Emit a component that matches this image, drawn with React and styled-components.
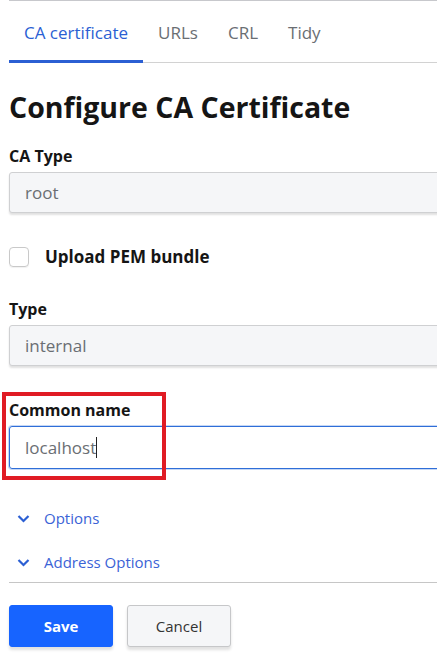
import React from "react"
import styled, { createGlobalStyle } from "styled-components"

const GlobalStyle = createGlobalStyle`
  body {
    margin: 0;
    background: #fff;
    font-family: "Open Sans", "Noto Sans", sans-serif;
    color: #151515;
    overflow: hidden;
  }
`

const Page = styled.div`
  width: 437px;
  height: 670px;
  overflow: hidden;
  padding-left: 9px;
  box-sizing: border-box;
`

const Inner = styled.div`
  width: 470px;
  border-top: 1px solid #c7c8cc;
`

const Tabs = styled.ul`
  display: flex;
  margin: 0;
  padding: 0;
  list-style: none;
  height: 61px;
  border-bottom: 1px solid #d2d2d2;
`

const Tab = styled.li`
  padding: 3px 15px 0;
  display: flex;
  align-items: center;
  font-size: 17px;
  color: ${p => (p.$active ? "#2b5fd3" : "#6a6e73")};
  border-bottom: 3px solid ${p => (p.$active ? "#2b5fd3" : "transparent")};
  margin-bottom: -1px;
`

const Heading = styled.h1`
  margin: 0;
  padding-top: 24px;
  font-size: 28.5px;
  line-height: 40px;
  font-weight: 700;
  color: #151515;
`

const Form = styled.div`
  display: flex;
  flex-direction: column;
`

const Label = styled.label`
  display: block;
  font-size: 16px;
  font-weight: 700;
  line-height: 22px;
  margin-top: ${p => p.$top || 0}px;
  margin-bottom: 5px;
`

const Select = styled.div`
  height: 41px;
  box-sizing: border-box;
  background: #f5f6f8;
  border: 1px solid #cfd0d2;
  border-radius: 3px;
  box-shadow: 0 2px 2px rgba(0, 0, 0, 0.12);
  padding: 0 15px;
  display: flex;
  align-items: center;
  font-size: 17px;
  color: #6a6e73;
`

const CheckRow = styled.div`
  display: flex;
  align-items: center;
  gap: 16px;
  margin-top: 32px;
  font-size: 17px;
  font-weight: 700;
`

const Box = styled.span`
  width: 18px;
  height: 18px;
  border: 1px solid #c9c9c9;
  border-radius: 4px;
  box-shadow: 0 1px 1px rgba(0, 0, 0, 0.06);
`

const Highlight = styled.div`
  position: relative;
  margin-top: 33px;
`

const RedFrame = styled.div`
  position: absolute;
  left: -7px;
  top: -7px;
  width: 164px;
  height: 88px;
  box-sizing: border-box;
  border: 4px solid #e01b24;
  pointer-events: none;
`

const TextInput = styled.div`
  height: 43px;
  box-sizing: border-box;
  border: 1px solid #2f6ed8;
  border-radius: 3px;
  box-shadow: 0 0 0 1px #c5d7f5;
  padding: 0 15px;
  display: flex;
  align-items: center;
  font-size: 17px;
  color: #6a6e73;
`

const Caret = styled.span`
  display: inline-block;
  width: 1px;
  height: 21px;
  background: #222;
`

const Toggles = styled.div`
  display: flex;
  flex-direction: column;
  gap: 4px;
  margin-top: 29px;
  border-bottom: 1px solid #c6c6c6;
`

const Toggle = styled.div`
  display: flex;
  align-items: center;
  gap: 14px;
  padding-left: 8px;
  height: 40px;
  font-size: 15px;
  color: #3b63d6;
`

const Buttons = styled.div`
  display: flex;
  gap: 14px;
  margin-top: 22px;
`

const Button = styled.button`
  width: 104px;
  height: 42px;
  border-radius: 3px;
  font-family: inherit;
  font-size: 15px;
  font-weight: ${p => (p.$primary ? 700 : 400)};
  color: ${p => (p.$primary ? "#fff" : "#333")};
  background: ${p => (p.$primary ? "#1764ff" : "#f5f6f8")};
  border: 1px solid ${p => (p.$primary ? "#1764ff" : "#c6c7c9")};
  box-shadow: 0 3px 3px rgba(0, 0, 0, 0.12);
`

const Chevron = () => (
  <svg width="13" height="9" viewBox="0 0 13 9">
    <path d="M1.5 2 L6.5 7 L11.5 2" fill="none" stroke="#2b5fd3" strokeWidth="2.2" />
  </svg>
)

const App = () => (
  <>
    <GlobalStyle />
    <Page>
      <Inner>
        <Tabs>
          <Tab $active>CA certificate</Tab>
          <Tab>URLs</Tab>
          <Tab>CRL</Tab>
          <Tab>Tidy</Tab>
        </Tabs>
        <Heading>Configure CA Certificate</Heading>
        <Form>
          <Label $top={18}>CA Type</Label>
          <Select>root</Select>
          <CheckRow>
            <Box />
            Upload PEM bundle
          </CheckRow>
          <Label $top={30}>Type</Label>
          <Select>internal</Select>
          <Highlight>
            <RedFrame />
            <Label>Common name</Label>
            <TextInput>
              localhost<Caret />
            </TextInput>
          </Highlight>
          <Toggles>
            <Toggle>
              <Chevron />
              Options
            </Toggle>
            <Toggle>
              <Chevron />
              Address Options
            </Toggle>
          </Toggles>
          <Buttons>
            <Button $primary>Save</Button>
            <Button>Cancel</Button>
          </Buttons>
        </Form>
      </Inner>
    </Page>
  </>
)

export default App
